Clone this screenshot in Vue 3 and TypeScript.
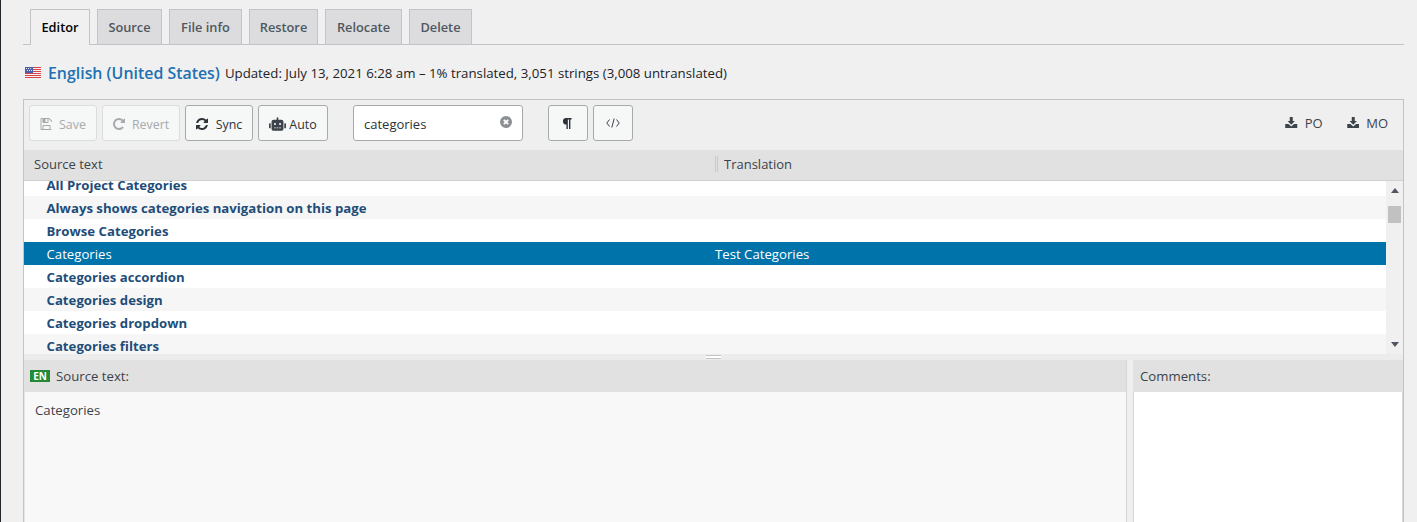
<script setup lang="ts">
interface Tab { label: string; width: number }
const tabs: Tab[] = [
  { label: 'Editor', width: 60 },
  { label: 'Source', width: 65 },
  { label: 'File info', width: 73 },
  { label: 'Restore', width: 69 },
  { label: 'Relocate', width: 77 },
  { label: 'Delete', width: 63 },
]
interface Row { source: string; target: string; done: boolean }
const rows: Row[] = [
  { source: 'All Project Categories', target: '', done: false },
  { source: 'Always shows categories navigation on this page', target: '', done: false },
  { source: 'Browse Categories', target: '', done: false },
  { source: 'Categories', target: 'Test Categories', done: true },
  { source: 'Categories accordion', target: '', done: false },
  { source: 'Categories design', target: '', done: false },
  { source: 'Categories dropdown', target: '', done: false },
  { source: 'Categories filters', target: '', done: false },
]
</script>

<template>
  <div class="page">
    <nav class="tabs">
      <a
        v-for="(t, i) in tabs"
        :key="t.label"
        class="tab"
        :class="{ active: i === 0 }"
        :style="{ width: t.width + 'px' }"
      >{{ t.label }}</a>
    </nav>

    <div class="heading">
      <svg class="flag" width="16" height="11" viewBox="0 0 16 11">
        <rect width="16" height="11" fill="#f4f4f4" />
        <path d="M0 0h16v1H0zM0 2h16v1H0zM0 4h16v1H0zM0 6h16v1H0zM0 8h16v1H0zM0 10h16v1H0z" fill="#d8434a" />
        <rect width="8" height="6" fill="#4a5fa5" />
        <path d="M1 1h1v1H1zM3 1h1v1H3zM5 1h1v1H5zM2 3h1v1H2zM4 3h1v1H4zM6 3h1v1H6z" fill="#dfe4f2" />
      </svg>
      <a class="lang">English (United States)</a>
      <span class="meta">Updated: July 13, 2021 6:28 am – 1% translated, 3,051 strings (3,008 untranslated)</span>
    </div>

    <section class="panel">
      <div class="toolbar">
        <button class="btn off save">
          <svg viewBox="0 0 1408 1536" class="ico"><path fill="currentColor" d="M384 1408h768v-384H384v384zm896 0h128V512q0-14-10-38.500T1378 440l-281-281q-10-10-34-20t-39-10v416q0 40-28 68t-68 28H352q-40 0-68-28t-28-68V109H128v1299h128V992q0-40 28-68t68-28h832q40 0 68 28t28 68v416zM896 480V160q0-13-9.500-22.500T864 128H672q-13 0-22.500 9.500T640 160v320q0 13 9.500 22.500T672 512h192q13 0 22.500-9.500T896 480zm512 32v928q0 40-28 68t-68 28H96q-40 0-68-28t-28-68V96q0-40 28-68T96 0h928q40 0 88 20t76 48l280 280q28 28 48 76t20 88z" /></svg>
          Save
        </button>
        <button class="btn off revert">
          <svg viewBox="0 0 1536 1536" class="ico"><path fill="currentColor" d="M1536 128v448q0 26-19 45t-45 19h-448q-42 0-59-40-17-39 14-69l138-138Q969 256 768 256q-104 0-198.500 40.500T406 406 296.500 569.500 256 768t40.500 198.500T406 1130t163.500 109.500T768 1280q119 0 225-52t179-147q7-10 23-12 15 0 25 9l137 138q9 8 9.500 20.500t-7.500 22.500q-109 132-264 204.500T768 1536q-156 0-298-61t-245-164-164-245T0 768t61-298 164-245T470 61 768 0q147 0 284.500 55.500T1297 212l130-129q29-31 70-14 39 17 39 59z" /></svg>
          Revert
        </button>
        <button class="btn sync">
          <svg viewBox="0 0 1536 1536" class="ico"><path fill="currentColor" d="M1511 928q0 5-1 7-64 268-268 434.500T764 1536q-146 0-282.500-55T238 1324l-129 129q-19 19-45 19t-45-19-19-45V960q0-26 19-45t45-19h448q26 0 45 19t19 45-19 45l-137 137q71 66 161 102t187 36q134 0 250-65t186-179q11-17 53-117 8-23 30-23h192q13 0 22.500 9.500t9.500 22.500zm25-800v448q0 26-19 45t-45 19h-448q-26 0-45-19t-19-45 19-45l138-138Q969 256 768 256q-134 0-250 65T332 500q-11 17-53 117-8 23-30 23H50q-13 0-22.500-9.500T18 608v-7q65-268 270-434.500T768 0q146 0 284 55.500T1297 212l130-129q19-19 45-19t45 19 19 45z" /></svg>
          Sync
        </button>
        <button class="btn auto">
          <svg viewBox="0 0 640 512" class="ico robot"><path fill="currentColor" d="M32 224H64V416H32A31.960 31.960 0 0 1 0 384V256A31.960 31.960 0 0 1 32 224zm512-48V448a64.063 64.063 0 0 1-64 64H160a64.063 64.063 0 0 1-64-64V176a79.974 79.974 0 0 1 80-80H288V32a32 32 0 0 1 64 0V96H464A79.974 79.974 0 0 1 544 176zM264 256a40 40 0 1 0-40 40A39.997 39.997 0 0 0 264 256zm-8 128H192v32h64zm96 0H288v32h64zM456 256a40 40 0 1 0-40 40A39.997 39.997 0 0 0 456 256zm-8 128H384v32h64zM640 256V384a31.960 31.960 0 0 1-32 32H576V224h32A31.960 31.960 0 0 1 640 256z" /></svg>
          Auto
        </button>

        <div class="search">
          <span>categories</span>
          <svg viewBox="0 0 12 12" class="clear"><circle cx="6" cy="6" r="6" fill="#8c8f94" /><path d="M3.800 3.800l4.400 4.400M8.200 3.800l-4.400 4.400" stroke="#fff" stroke-width="1.800" /></svg>
        </div>

        <button class="btn square pilcrow">
          <svg viewBox="0 0 10 12" class="pil-ico"><path fill="#2c3338" d="M4 0h6v1.600H8.700V12H7.200V1.600H5.900V12H4.400V7.200A3.600 3.600 0 0 1 4 0z" /></svg>
        </button>
        <button class="btn square code">
          <svg viewBox="0 0 14 10" class="code-ico"><path d="M3.500 1.500L.8 5l2.700 3.500M10.500 1.500L13.200 5l-2.700 3.500M8.200 0.500L5.800 9.500" fill="none" stroke="#3c434a" stroke-width="1" /></svg>
        </button>

        <div class="downloads">
          <a class="dl">
            <svg viewBox="0 0 12 11" class="dl-ico"><path fill="#3c434a" d="M4.500 0h3v4h2.200L6 7.800 2.300 4h2.200zM0 7h3.200L6 9.500 8.800 7H12v4H0z" /></svg>
            PO
          </a>
          <a class="dl">
            <svg viewBox="0 0 12 11" class="dl-ico"><path fill="#3c434a" d="M4.500 0h3v4h2.200L6 7.800 2.300 4h2.200zM0 7h3.200L6 9.500 8.800 7H12v4H0z" /></svg>
            MO
          </a>
        </div>
      </div>

      <div class="cols">
        <div class="col-src">Source text</div>
        <div class="col-trg">Translation</div>
      </div>

      <div class="grid">
        <div class="list">
          <div class="list-inner">
            <div v-for="r in rows" :key="r.source" class="row" :class="{ selected: r.done }">
              <div class="cell-src">{{ r.source }}</div>
              <div class="cell-trg">{{ r.target }}</div>
            </div>
          </div>
        </div>
        <div class="scrollbar">
          <svg class="arrow" width="8" height="5" viewBox="0 0 8 5"><path d="M4 0l4 5H0z" fill="#50575e" /></svg>
          <div class="track"><div class="thumb"></div></div>
          <svg class="arrow" width="8" height="5" viewBox="0 0 8 5"><path d="M4 5L0 0h8z" fill="#50575e" /></svg>
        </div>
      </div>

      <div class="resizer"><i></i></div>

      <div class="panes">
        <div class="pane source">
          <header><b class="en">EN</b>Source text:</header>
          <div class="pane-body">Categories</div>
        </div>
        <div class="pane comments">
          <header>Comments:</header>
          <div class="pane-body"></div>
        </div>
      </div>
    </section>
  </div>
</template>

<style>
html, body { margin: 0; height: 522px; overflow: hidden; background: #f0f0f1; }
</style>

<style scoped>
.page {
  box-sizing: border-box;
  height: 522px;
  overflow: hidden;
  padding: 9px 13px 0 22px;
  border-left: 1px solid #23282d;
  background: #f0f0f1;
  font-family: "Open Sans", "Noto Sans", sans-serif;
  font-size: 13px;
  color: #3c434a;
}
.tabs {
  display: flex;
  gap: 7px;
  height: 35px;
  padding-left: 7px;
  border-bottom: 1px solid #c3c4c7;
}
.tab {
  box-sizing: border-box;
  height: 35px;
  border: 1px solid #c3c4c7;
  border-bottom: 0;
  background: #dcdcde;
  color: #50575e;
  font-weight: 600;
  font-size: 12.800px;
  line-height: 34px;
  text-align: center;
}
.tab.active { height: 36px; background: #f0f0f1; color: #000; }
.heading {
  display: flex;
  align-items: center;
  height: 20px;
  margin-top: 18px;
  padding-left: 2px;
  color: #1d2327;
}
.flag { margin-right: 7px; position: relative; top: -1px; }
.lang { color: #2271b1; font-size: 15.900px; font-weight: 600; margin-right: 5px; }
.meta { font-size: 13.250px; }
.panel {
  margin-top: 16px;
  border: 1px solid #c3c4c7;
  border-bottom: 0;
  background: #efefef;
}
.toolbar {
  display: flex;
  align-items: flex-start;
  height: 50px;
  padding: 5px 15px 0 5px;
  box-sizing: border-box;
}
.btn {
  box-sizing: border-box;
  display: flex;
  align-items: center;
  justify-content: center;
  gap: 7px;
  height: 36px;
  padding: 2px 0 0;
  border: 1px solid #a7aaad;
  border-radius: 3px;
  background: #f6f7f7;
  color: #2c3338;
  font: inherit;
  font-size: 12.400px;
  margin-right: 5px;
}
.btn.off { border-color: #dcdcde; color: #a7aaad; }
.save { width: 68px; }
.revert { width: 78px; }
.sync { width: 68px; gap: 8px; }
.auto { width: 70px; gap: 3px; }
.ico { width: 12px; height: 12px; margin-top: -1px; }
.robot { width: 17px; height: 14px; color: #3c434a; }
.search {
  box-sizing: border-box;
  display: flex;
  align-items: center;
  justify-content: space-between;
  width: 170px;
  height: 36px;
  margin: 0 25px 0 20px;
  padding: 1px 10px 0;
  border: 1px solid #a7aaad;
  border-radius: 3px;
  background: #fff;
  color: #2c3338;
}
.clear { width: 12px; height: 12px; margin-top: -3px; }
.square { width: 40px; padding: 0; }
.pil-ico { width: 10px; height: 11px; margin-left: -2px; }
.code-ico { width: 14px; height: 10px; margin-left: -1px; }
.downloads { margin-left: auto; display: flex; gap: 24px; height: 36px; align-items: center; }
.dl { display: flex; align-items: center; gap: 7px; color: #3c434a; }
.dl-ico { width: 12.500px; height: 11px; margin-top: -2px; }
.cols {
  display: flex;
  height: 30px;
  background: #e1e1e1;
  border-bottom: 1px solid #d0d0d0;
  color: #3c434a;
}
.col-src {
  box-sizing: border-box;
  width: 694px;
  height: 16px;
  margin-top: 6px;
  margin-right: 5px;
  padding-left: 10px;
  border-right: 3px double #c9c9c9;
  line-height: 16px;
}
.col-trg { height: 16px; margin-top: 6px; margin-left: 1px; line-height: 16px; }
.grid { display: flex; height: 173px; overflow: hidden; background: #f0f0f1; }
.list { flex: 1; overflow: hidden; background: #fff; }
.list-inner { margin-top: -8px; }
.row { display: flex; height: 23px; line-height: 25px; font-size: 13.200px; font-weight: 700; color: #1e4d78; }
.row:nth-child(even) { background: #f6f6f6; }
.row.selected { background: #0073aa; color: #fff; font-weight: 400; }
.cell-src { width: 691px; padding-left: 22.500px; box-sizing: border-box; }
.cell-trg { flex: 1; }
.scrollbar {
  box-sizing: border-box;
  width: 17px;
  display: flex;
  flex-direction: column;
  align-items: center;
  background: #f0f0f1;
  padding: 7px 0;
}
.track { flex: 1; width: 100%; padding-top: 13px; }
.thumb { width: 13px; height: 17px; margin-left: 2px; background: #c1c1c1; }
.resizer {
  height: 6px;
  display: flex;
  justify-content: center;
  background: #ececec;
}
.resizer i {
  display: block;
  width: 15px;
  height: 4px;
  margin-top: 1px;
  margin-left: -1px;
  border-top: 1px solid #c3c4c7;
  border-bottom: 1px solid #c3c4c7;
  box-sizing: border-box;
  background: #fff;
}
.panes { display: flex; gap: 6px; height: 220px; }
.pane { display: flex; flex-direction: column; }
.pane header {
  display: flex;
  align-items: center;
  box-sizing: border-box;
  height: 32px;
  padding: 0 0 1px 6px;
  background: #e1e1e1;
  color: #3c434a;
  font-size: 13.200px;
}
.pane-body { flex: 1; }
.source { box-sizing: border-box; width: 1103px; border-right: 1px solid #d6d6d6; }
.source .pane-body { padding: 9px 10px; background: #f8f8f8; border-left: 1px solid #e6e6e6; font-size: 13.200px; }
.comments { flex: 1; }
.comments header { padding-left: 7px; }
.comments .pane-body { background: #fff; border-left: 1px solid #d6d6d6; border-right: 1px solid #d6d6d6; }
.en {
  width: 20px;
  height: 12px;
  margin-right: 6px;
  background: #228b34;
  color: #fff;
  font-size: 10px;
  font-weight: 700;
  line-height: 12px;
  text-align: center;
}
</style>
